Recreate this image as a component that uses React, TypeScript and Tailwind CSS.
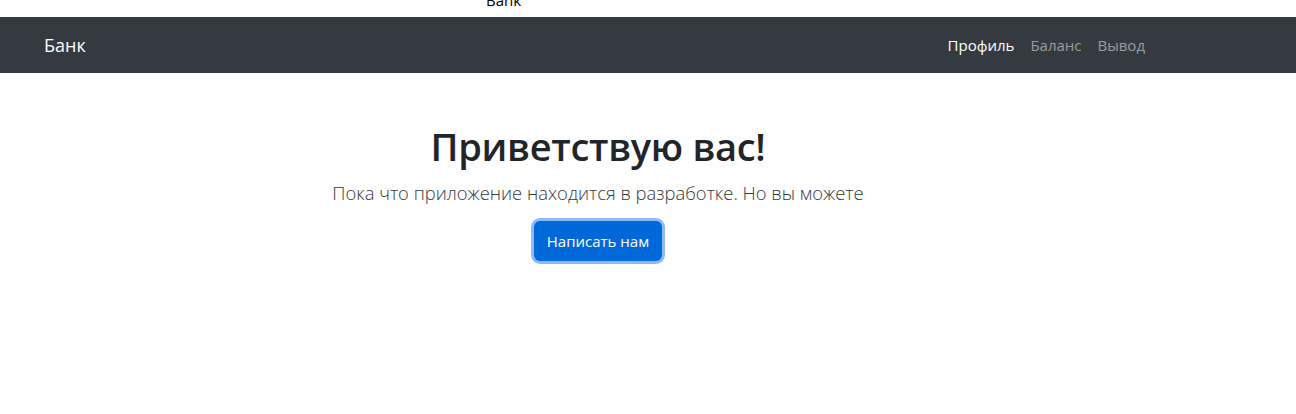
import React from 'react';

const font = { fontFamily: '"Open Sans", "Noto Sans", "Liberation Sans", sans-serif' };

export default function App() {
    return (
        <div className="min-h-[414px] bg-white text-[#212529]" style={font}>
            {/* page title strip */}
            <div className="h-[17px] overflow-hidden bg-white">
                <div className="-mt-[9px] pl-[486px] text-[15px] leading-[18px] text-black">Bank</div>
            </div>

            {/* Navbar */}
            <nav className="h-14 bg-[#343a40] flex items-center justify-between pl-[44px] pr-[151px]">
                <a className="text-white text-[18px] leading-none">Банк</a>
                <div className="flex items-center gap-4 text-[15px]">
                    <a className="text-white">Профиль</a>
                    <a className="text-white/50">Баланс</a>
                    <a className="text-white/50">Вывод</a>
                </div>
            </nav>

            {/* Hero */}
            <div className="w-[1196px] flex flex-col items-center pt-[51px]">
                <h1 className="text-[38px] font-semibold leading-[1.2] tracking-[-0.3px]">Приветствую вас!</h1>
                <p className="mt-[9px] text-[18.4px] font-light leading-[1.5] text-[#343a40]">
                    Пока что приложение находится в разработке. Но вы можете
                </p>
                <button className="mt-[15px] h-10 w-[128px] rounded-md bg-[#0069d9] text-white text-[15px] ring-[3px] ring-[#8fb9fb]">
                    Написать нам
                </button>
            </div>
        </div>
    );
}
